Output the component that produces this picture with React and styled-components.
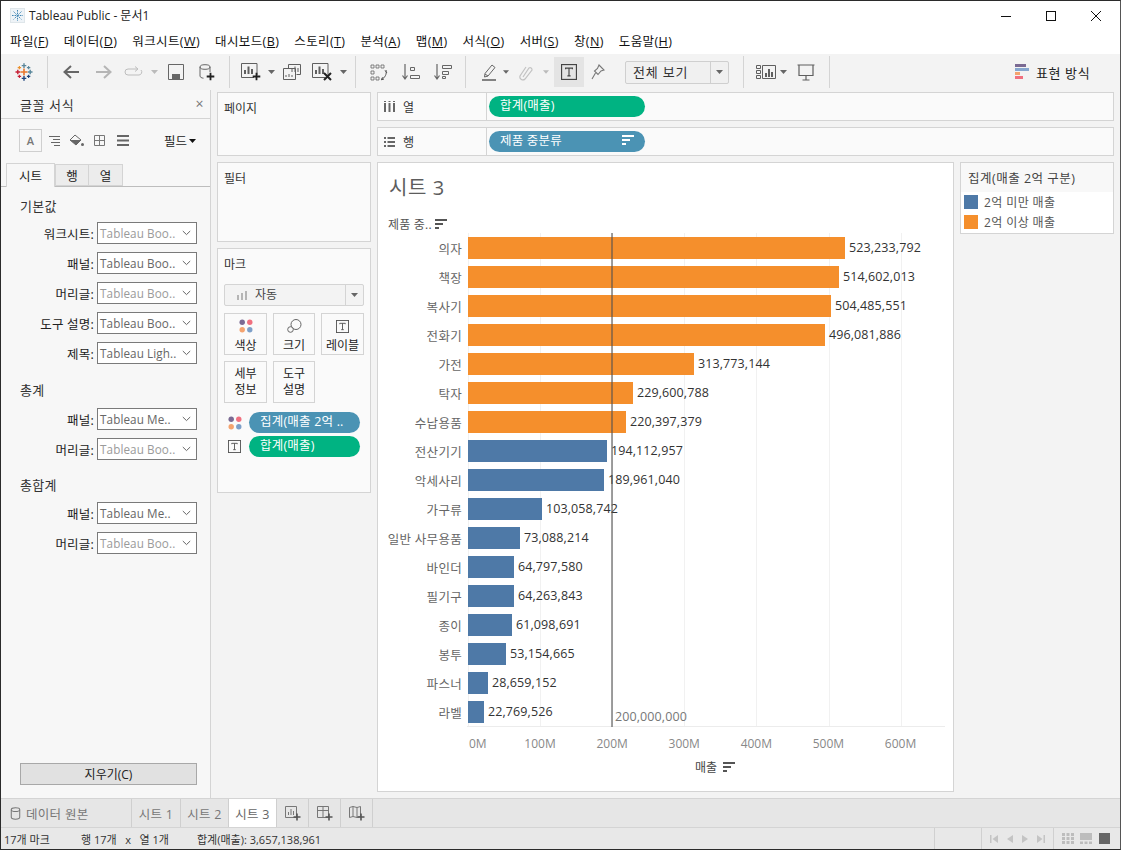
import React from "react";
import styled, { createGlobalStyle } from "styled-components";

const Global = createGlobalStyle`
  html, body { margin: 0; padding: 0; background: #fff; }
  * { box-sizing: border-box; }
  body { font-family: "Open Sans", "Noto Sans CJK KR", sans-serif; font-size: 12px; color: #222; }
`;

const ink = "#5f5f5f";
const Win = styled.div`
  width: 1121px; height: 850px; display: flex; flex-direction: column;
  border: 1px solid #2b2b2b; border-right-color: #555; background: #f3f3f3; overflow: hidden;
`;
const TitleBar = styled.div`
  height: 29px; background: #fff; display: flex; align-items: center; padding: 0 2px 0 9px; flex: none;
`;
const TitleText = styled.span`margin-left: 4px; font-size: 12px; line-height: 16px; color: #222; flex: 1;`;
const WinBtn = styled.div`width: 45px; height: 29px; display: flex; align-items: center; justify-content: center;`;
const MenuBar = styled.div`height: 24px; background: #fff; display: flex; align-items: center; padding-left: 9px; gap: 15px; flex: none;`;
const MenuItem = styled.span`
  font-size: 12.5px; letter-spacing: .4px; line-height: 16px; color: #111; white-space: nowrap;
  u { text-underline-offset: 1px; }
`;
const Toolbar = styled.div`height: 36px; background: #f3f3f3; display: flex; align-items: stretch; flex: none;`;
const ToolGroup = styled.div`
  width: ${p => p.$w}px; flex: none; display: flex; align-items: center; margin: 2px 0;
  border-right: 1px solid #d4d4d4; padding-left: ${p => p.$pad || 0}px;
`;
const Tool = styled.div`
  width: ${p => p.$w}px; height: 30px; flex: none; display: flex; align-items: center; justify-content: center;
  background: ${p => (p.$on ? "#e4e4e4" : "transparent")};
`;
const Combo = styled.div`
  width: 104px; height: 23px; margin-left: 13px; display: flex; align-items: center; background: #f0f0f0;
  border: 1px solid #cfcfcf; border-radius: 2px; font-size: 13px; color: #333;
`;
const ComboText = styled.span`flex: 1; padding-left: 7px; letter-spacing: .8px; line-height: 16px;`;
const ComboArrow = styled.span`
  width: 18px; height: 100%; border-left: 1px solid #cfcfcf; display: flex; align-items: center; justify-content: center;
`;
const ShowMe = styled.div`
  margin-left: auto; width: 105px; display: flex; align-items: center; gap: 7px; font-size: 13px; color: #222; letter-spacing: .6px;
`;

const Main = styled.div`flex: 1; min-height: 0; display: flex;`;
const Side = styled.aside`width: 210px; flex: none; background: #f7f7f7; border-right: 1px solid #d4d4d4; display: flex; flex-direction: column;`;
const SideHead = styled.div`
  height: 29px; flex: none; border-bottom: 1px solid #d4d4d4; display: flex; align-items: center; justify-content: space-between;
  padding: 0 6px 0 19px; font-size: 13px; color: #333; letter-spacing: .6px;
`;
const Close = styled.span`font-size: 14px; color: #777; line-height: 14px;`;
const FmtRow = styled.div`display: flex; align-items: center; margin: 10px 14px 0 18px; height: 23px; flex: none;`;
const FmtA = styled.span`
  width: 23px; height: 23px; border: 1px solid #cfcfcf; display: flex; align-items: center; justify-content: center;
  font-size: 11px; font-weight: 600; color: #777;
`;
const FmtIcon = styled.span`width: 23px; height: 23px; display: flex; align-items: center; justify-content: center;`;
const Field = styled.span`margin-left: auto; display: flex; align-items: center; gap: 2px; font-size: 12.5px; color: #222;`;
const Tabs = styled.div`margin-top: 11px; height: 24px; flex: none; display: flex; align-items: flex-end; padding-left: 5px; border-bottom: 1px solid #bdbdbd;`;
const Tab = styled.div`
  width: ${p => p.$w}px; height: ${p => (p.$on ? 24 : 22)}px; margin-bottom: ${p => (p.$on ? -1 : 0)}px;
  background: ${p => (p.$on ? "#f7f7f7" : "#ececec")}; border: 1px solid #d4d4d4; border-bottom: ${p => (p.$on ? "none" : "1px solid #d4d4d4")};
  border-left: ${p => (p.$first ? "1px solid #d4d4d4" : "none")};
  display: flex; align-items: center; justify-content: center; font-size: 12.5px; color: #222;
`;
const Section = styled.div`margin: ${p => p.$mt}px 0 0 19px; height: 18px; font-size: 13px; line-height: 18px; color: #333; letter-spacing: .3px; flex: none;`;
const Rows = styled.div`margin-top: ${p => p.$mt}px; display: flex; flex-direction: column; gap: 8px; flex: none;`;
const FRow = styled.div`display: flex; align-items: center; height: 22px; justify-content: flex-end; padding-right: 13px; gap: 3px;`;
const FLabel = styled.span`font-size: 12.5px; letter-spacing: .2px; color: #222; white-space: nowrap;`;
const FSelect = styled.div`
  width: 100px; height: 22px; border: 1px solid #7a7a7a; background: #fff; display: flex; align-items: center; padding: 0 5px 0 2px;
  font-size: 11.7px; color: ${p => (p.$muted ? "#9a9a9a" : "#666")}; white-space: nowrap;
`;
const FText = styled.span`flex: 1; letter-spacing: .1px;`;
const ClearBtn = styled.div`
  margin: auto 13px 13px 19px; height: 22px; flex: none; border: 1px solid #a8a8a8; background: #e1e1e1;
  display: flex; align-items: center; justify-content: center; font-size: 12px; color: #222;
`;

const Work = styled.div`flex: 1; min-width: 0; display: flex; gap: 6px; padding: 2px 6px 6px 6px;`;
const Cards = styled.div`width: 154px; flex: none; display: flex; flex-direction: column; gap: 6px;`;
const Card = styled.section`
  height: ${p => p.$h}px; flex: none; background: #fafafa; border: 1px solid #d4d4d4; padding: 7px 6px;
  font-size: 12px; color: #333; line-height: 18px;
`;
const MarkType = styled.div`
  margin-top: 10px; height: 22px; width: 140px; background: #f3f3f3; border: 1px solid #d4d4d4; border-radius: 2px; display: flex; align-items: center;
  font-size: 12px; color: #444;
`;
const MarkName = styled.span`flex: 1; display: flex; align-items: center; gap: 8px; padding-left: 12px;`;
const MarkArrow = styled.span`width: 18px; height: 100%; border-left: 1px solid #d4d4d4; display: flex; align-items: center; justify-content: center;`;
const MarkGrid = styled.div`margin-top: 7px; display: grid; grid-template-columns: 43px 42px 43px; column-gap: 6px; row-gap: 6px; width: 140px;`;
const MarkBtn = styled.div`
  height: 42px; border: 1px solid #d4d4d4; display: flex; flex-direction: column; align-items: center; justify-content: flex-end;
  font-size: 12px; line-height: 15px; color: #222; text-align: center; gap: 5px; padding-bottom: 1px;
`;
const TwoLine = styled.span`font-size: 12px; line-height: 16px; margin-bottom: 3px;`;
const PillRows = styled.div`margin-top: 9px; display: flex; flex-direction: column; gap: 3px;`;
const PillRow = styled.div`display: flex; align-items: center; gap: 4px;`;
const PillIcon = styled.span`width: 21px; display: flex; justify-content: center;`;
const Pill = styled.div`
  width: ${p => p.$w}px; height: 21px; border-radius: 11px; background: ${p => p.$c}; color: #fff; font-size: 12.5px; letter-spacing: .2px; line-height: 17px;
  padding: 0 ${p => p.$pr || 10}px 3px 11px; display: flex; align-items: center; justify-content: space-between; white-space: nowrap;
`;

const Content = styled.div`flex: 1; min-width: 0; display: flex; flex-direction: column; gap: 6px;`;
const Shelf = styled.div`height: 29px; flex: none; display: flex; border: 1px solid #d4d4d4; background: #fafafa;`;
const ShelfName = styled.div`
  width: 109px; flex: none; border-right: 1px solid #d4d4d4; display: flex; align-items: center; gap: 8px; padding-left: 6px; font-size: 12px; color: #333;
`;
const ShelfBody = styled.div`padding: 3px 0 0 2px;`;
const Lower = styled.div`flex: 1; min-height: 0; display: flex; gap: 6px;`;
const Sheet = styled.div`width: 577px; flex: none; background: #fff; border: 1px solid #d4d4d4; display: flex; flex-direction: column;`;
const SheetTitle = styled.div`margin: 12px 0 0 11px; height: 26px; font-size: 20px; line-height: 26px; color: #5d5d5d; letter-spacing: .6px;`;
const RowHeader = styled.div`margin: 15px 0 0 10px; height: 16px; display: flex; align-items: center; gap: 3px; font-size: 12px; letter-spacing: .2px; color: #555;`;
const Plot = styled.div`position: relative; margin-top: 1px; padding: 4px 0; width: 567px; display: flex; flex-direction: column; gap: 7px;`;
const AxisLine = styled.div`position: absolute; left: 89px; right: 0; bottom: 0; height: 1px; background: #ececec;`;
const Grid = styled.div`position: absolute; top: 0; bottom: 0; width: 1px; background: #f1f1f1;`;
const RefLine = styled.div`position: absolute; top: 0; bottom: 0; left: 233px; width: 2px; background: rgba(80,80,80,.55); z-index: 2;`;
const RefLabel = styled.span`position: absolute; left: 237px; bottom: 2px; font-size: 12.5px; line-height: 16px; color: #777; z-index: 2; letter-spacing: .1px;`;
const BarRow = styled.div`position: relative; z-index: 1; display: flex; align-items: center; height: 22px;`;
const RowLabel = styled.span`width: 84px; flex: none; margin-right: 6px; text-align: right; font-size: 12.5px; letter-spacing: .3px; color: #666; white-space: nowrap;`;
const Bar = styled.div`height: 22px; flex: none; background: ${p => (p.$big ? "#f58f2c" : "#4e79a7")};`;
const Value = styled.span`margin-left: 4px; font-size: 12.5px; line-height: 16px; color: #333; letter-spacing: .1px;`;
const Ticks = styled.div`margin: 9px 0 0 90px; display: flex; height: 16px; font-size: 12px; line-height: 16px; color: #888;`;
const Tick = styled.span`flex: none; width: ${p => (p.$first ? 36 : 72.1)}px; text-align: ${p => (p.$first ? "left" : "center")}; padding-left: ${p => (p.$first ? 1 : 0)}px;`;
const AxisTitle = styled.div`margin: 7px 0 0 317px; height: 16px; display: flex; align-items: center; gap: 6px; font-size: 12px; color: #444;`;
const Legend = styled.div`width: 154px; height: 72px; flex: none; background: #fff; border: 1px solid #d4d4d4; display: flex; flex-direction: column;`;
const LegendTitle = styled.div`height: 29px; flex: none; background: #f8f8f8; padding: 0 0 0 7px; display: flex; align-items: center; font-size: 12.5px; letter-spacing: .5px; color: #444; white-space: nowrap;`;
const LegendRow = styled.div`height: 20px; flex: none; display: flex; align-items: center; gap: 6px; padding-left: 3px; font-size: 12px; color: #555; letter-spacing: .4px;`;
const Swatch = styled.span`width: 14px; height: 14px; background: ${p => p.$c};`;

const TabBar = styled.div`height: 30px; flex: none; display: flex; background: #e6e6e6; border-top: 1px solid #d4d4d4; border-bottom: 1px solid #d4d4d4;`;
const SheetTab = styled.div`
  width: ${p => p.$w}px; flex: none; border-right: 1px solid #cfcfcf; background: ${p => (p.$on ? "#fff" : "transparent")};
  display: flex; align-items: center; justify-content: ${p => (p.$left ? "flex-start" : "center")}; padding-left: ${p => (p.$left ? 9 : 0)}px;
  gap: 5px; font-size: 12.5px; color: ${p => (p.$on ? "#666" : "#777")}; letter-spacing: .3px;
`;
const Status = styled.div`height: 21px; flex: none; display: flex; align-items: center; background: #e8e8e8; font-size: 11px; color: #333;`;
const StatusText = styled.span`width: ${p => p.$w}px; flex: none; white-space: pre; padding-left: ${p => p.$pl || 0}px;`;
const StatusCell = styled.div`
  width: ${p => p.$w}px; flex: none; height: 100%; border-left: 1px solid #d0d0d0; display: flex; align-items: center; justify-content: ${p => (p.$around ? "space-around" : "flex-start")};
  padding: 0 ${p => p.$p || 0}px;
`;

const S = ({ w = 18, h = 18, vb, children }) => <svg width={w} height={h} viewBox={vb || `0 0 ${w} ${h}`} fill="none">{children}</svg>;
const Caret = ({ c = "#666" }) => <svg width="7" height="4" viewBox="0 0 7 4"><path d="M0 0h7L3.5 4z" fill={c} /></svg>;
const Chevron = () => <svg width="9" height="6" viewBox="0 0 9 6" fill="none"><path d="M.8 1l3.7 3.6L8.2 1" stroke="#666" /></svg>;
const Sort = ({ c = "#555" }) => <svg width="12" height="10" viewBox="0 0 12 10"><path d="M0 0h12v2H0zM0 4h8v2H0zM0 8h4v2H0z" fill={c} /></svg>;
const TBox = ({ s = 14, c = "#555" }) => (
  <svg width={s} height={s} viewBox="0 0 14 14" fill="none">
    <rect x=".5" y=".5" width="13" height="13" stroke={c} />
    <path d="M4 4.5V3.6h6v.9M7 3.6v6.8M5.6 10.4h2.8" stroke={c} />
  </svg>
);
const Dots = ({ s = 14 }) => (
  <svg width={s} height={s} viewBox="0 0 14 14">
    <circle cx="3.2" cy="3.2" r="2.7" fill="#7b6a93" />
    <circle cx="10.8" cy="3.2" r="2.7" fill="#f0707f" />
    <circle cx="3.2" cy="10.8" r="2.7" fill="#f4a36f" />
    <circle cx="10.8" cy="10.8" r="2.7" fill="#7d9fc8" />
  </svg>
);
const Cross = ({ x, y, r, c, w = 1.4 }) => <path d={`M${x - r} ${y}h${2 * r}M${x} ${y - r}v${2 * r}`} stroke={c} strokeWidth={w} />;
const Logo = ({ s = 18 }) => (
  <svg width={s} height={s} viewBox="0 0 18 18" fill="none">
    <Cross x={9} y={9} r={3.6} c="#e8762c" w={1.6} />
    <Cross x={9} y={2.6} r={2.3} c="#5b879b" />
    <Cross x={9} y={15.4} r={2.3} c="#1f457e" />
    <Cross x={2.8} y={9} r={2.3} c="#c72035" />
    <Cross x={15.2} y={9} r={2.3} c="#59879b" />
    <Cross x={4.4} y={4.6} r={1.7} c="#eb912b" w={1.1} />
    <Cross x={13.6} y={4.6} r={1.7} c="#5b879b" w={1.1} />
    <Cross x={4.4} y={13.4} r={1.7} c="#c72035" w={1.1} />
    <Cross x={13.6} y={13.4} r={1.7} c="#1f457e" w={1.1} />
  </svg>
);
const Plus = ({ x, y, r = 4, w = 2, c = "#222" }) => <path d={`M${x - r} ${y}h${2 * r}M${x} ${y - r}v${2 * r}`} stroke={c} strokeWidth={w} />;
const BarsBox = ({ x = 0, y = 0, w = 16, h = 15 }) => (
  <>
    <path d={`M${x + w} ${y + h - 3}V${y + .5}H${x + .5}V${y + h - .5}H${x + w - 3}`} stroke={ink} />
    <path d={`M${x + 4} ${y + 11}V${y + 7}M${x + 7.5} ${y + 11}V${y + 3.5}M${x + 11} ${y + 11}V${y + 6}`} stroke={ink} strokeWidth="2" />
  </>
);
const Cyl = ({ s = 11, c = "#777" }) => (
  <svg width={s} height={s + 2} viewBox="0 0 13 15" fill="none">
    <ellipse cx="6.5" cy="3" rx="5" ry="2.2" stroke={c} strokeWidth="1.2" />
    <path d="M1.5 3v9c0 1.2 2.2 2.2 5 2.2s5-1 5-2.2V3" stroke={c} strokeWidth="1.2" />
  </svg>
);

const data = [
  ["의자", 523233792], ["책장", 514602013], ["복사기", 504485551], ["전화기", 496081886],
  ["가전", 313773144], ["탁자", 229600788], ["수납용품", 220397379], ["전산기기", 194112957],
  ["악세사리", 189961040], ["가구류", 103058742], ["일반 사무용품", 73088214], ["바인더", 64797580],
  ["필기구", 64263843], ["종이", 61098691], ["봉투", 53154665], ["파스너", 28659152], ["라벨", 22769526],
];
const SCALE = 72.1 / 1e8;
const menus = [["파일", "F"], ["데이터", "D"], ["워크시트", "W"], ["대시보드", "B"], ["스토리", "T"], ["분석", "A"], ["맵", "M"], ["서식", "O"], ["서버", "S"], ["창", "N"], ["도움말", "H"]];

const FontRow = ({ label, value, muted }) => (
  <FRow>
    <FLabel>{label}:</FLabel>
    <FSelect $muted={muted}><FText>{value}</FText><Chevron /></FSelect>
  </FRow>
);

export default function App() {
  return (
    <Win>
      <Global />
      <TitleBar>
        <svg width="15" height="15" viewBox="0 0 15 15" fill="none">
          <rect x=".5" y=".5" width="14" height="14" fill="#eef3f7" stroke="#dfe6ea" />
          <g stroke="#3f86b5" strokeWidth="1">
            <path d="M7.5 2v11M2 7.5h11M3.6 3.6l7.8 7.8M11.4 3.6l-7.8 7.8" strokeDasharray="1.6 1" />
          </g>
        </svg>
        <TitleText>Tableau Public - 문서1</TitleText>
        <WinBtn><svg width="10" height="10" viewBox="0 0 10 10"><path d="M0 5.5h10" stroke="#111" /></svg></WinBtn>
        <WinBtn><svg width="10" height="10" viewBox="0 0 10 10" fill="none"><rect x=".5" y=".5" width="9" height="9" stroke="#111" /></svg></WinBtn>
        <WinBtn><svg width="10" height="10" viewBox="0 0 10 10"><path d="M0 0l10 10M10 0L0 10" stroke="#111" /></svg></WinBtn>
      </TitleBar>
      <MenuBar>
        {menus.map(([n, k]) => <MenuItem key={k}>{n}(<u>{k}</u>)</MenuItem>)}
      </MenuBar>
      <Toolbar>
        <ToolGroup $w={47} $pad={14}><Logo s={18} /></ToolGroup>
        <ToolGroup $w={182} $pad={6}>
          <Tool $w={34}><S w={18} h={16}><path d="M17 8H3M9 2L2.5 8 9 14" stroke="#666" strokeWidth="2" /></S></Tool>
          <Tool $w={32}><S w={18} h={16}><path d="M1 8h14M9 2l6.5 6L9 14" stroke="#b5b5b5" strokeWidth="2" /></S></Tool>
          <Tool $w={28}><S w={20} h={12}><path d="M13 3H4a3 3 0 0 0 0 6h11a3 3 0 0 0 2-5M11 .5L14 3l-3 2.5" stroke="#bdbdbd" /></S></Tool>
          <Tool $w={12}><Caret c="#bbb" /></Tool>
          <Tool $w={32}><S w={16} h={16}><path d="M.5.5h15v15H.5z" stroke="#666" /><rect x="4" y="10" width="8" height="5" fill="#666" /></S></Tool>
          <Tool $w={30}><S w={16} h={17}><ellipse cx="6" cy="3" rx="5" ry="2.3" stroke="#666" /><path d="M1 3v9c0 1.2 1.6 2 3.5 2.2M11 3v5" stroke="#666" /><Plus x={11.5} y={12.5} r={3.8} w={1.8} /></S></Tool>
        </ToolGroup>
        <ToolGroup $w={126} $pad={9}>
          <Tool $w={24}><S w={20} h={18}><BarsBox /><Plus x={15.5} y={13.5} r={3.8} w={1.8} /></S></Tool>
          <Tool $w={16}><Caret /></Tool>
          <Tool $w={26}><S w={18} h={16}><path d="M5.5 4V.5h12v10h-4M.5 4.5h12v11H.5z" stroke={ink} /><path d="M9 8V5M12 8V2.5M15 8V4M3 13v-2M6 13v-3M9 13v-2" stroke={ink} /></S></Tool>
          <Tool $w={34}><S w={20} h={18}><BarsBox /><path d="M12 10l7 7M19 10l-7 7" stroke="#222" strokeWidth="2" /></S></Tool>
          <Tool $w={8}><Caret /></Tool>
        </ToolGroup>
        <ToolGroup $w={110} $pad={7}>
          <Tool $w={32}><S w={18} h={17}><path d="M1 1h3v3H1zM6 1h3v3H6zM11 1h3v3h-3zM1 7h3v3H1zM1 13h3v3H1zM6 13h3v3H6z" stroke="#666" strokeWidth=".8" /><path d="M16 6c1 4-1 8-5 9.5M15 6.5L17 9M14 15l-2.5.8 1-2.5" stroke="#555" /></S></Tool>
          <Tool $w={32}><S w={18} h={17}><path d="M3 0v14M.5 11.5L3 15l2.5-3.5" stroke="#666" strokeWidth="1.2" /><path d="M8.5 3.5h4v3h-4zM8.5 11.5h9v3h-9z" stroke="#666" /></S></Tool>
          <Tool $w={32}><S w={18} h={17}><path d="M3 0v14M.5 11.5L3 15l2.5-3.5" stroke="#666" strokeWidth="1.2" /><path d="M8.5 1.5h9v3h-9zM8.5 7.5h6v3h-6zM8.5 12.5h3v2h-3z" stroke="#666" /></S></Tool>
        </ToolGroup>
        <ToolGroup $w={278} $pad={9}>
          <Tool $w={28}><S w={14} h={17}><path d="M10 1l3 2.5-7 8.500-3.500 1 .5-3.500zM3 10l3 2" stroke="#666" /><path d="M0 16h14" stroke="#666" strokeWidth="1.6" /></S></Tool>
          <Tool $w={6}><Caret /></Tool>
          <Tool $w={34}><S w={14} h={17}><path d="M4 13l6-9a2 2 0 0 1 3 2L6 15a3 3 0 0 1-5-3l6-9" stroke="#c2c2c2" strokeWidth="1.2" /></S></Tool>
          <Tool $w={6}><Caret c="#bbb" /></Tool>
          <Tool $w={5} />
          <Tool $w={30} $on><TBox s={16} c="#444" /></Tool>
          <Tool $w={28}><S w={14} h={16}><path d="M8 1l5 5-3 1-3 3.5L3.5 7l3-2.5zM4.5 9L1 15" stroke="#777" strokeWidth="1.1" /></S></Tool>
          <Combo>
            <ComboText>전체 보기</ComboText>
            <ComboArrow><Caret /></ComboArrow>
          </Combo>
        </ToolGroup>
        <ToolGroup $w={86} $pad={12}>
          <Tool $w={20}><S w={20} h={16}><path d="M.5 1.5h4v3h-4zM.5 6.5h4v3h-4zM.5 11.5h4v3h-4zM6.5 1.5h13v13h-13z" stroke={ink} /><path d="M10 13V9M13 13V5M16 13V8" stroke={ink} strokeWidth="2" /></S></Tool>
          <Tool $w={14}><Caret /></Tool>
          <Tool $w={32}><S w={18} h={17}><path d="M.5 1h17M2 1v10.5h14V1M9 11.5V16M5.5 16h7" stroke={ink} strokeWidth="1.2" /></S></Tool>
        </ToolGroup>
        <ShowMe>
          <S w={14} h={16}><path d="M0 0h11v3H0z" fill="#7b6a93" /><path d="M0 4h14v3H0z" fill="#87a7cf" /><path d="M0 8h5v3H0z" fill="#f4a36f" /><path d="M0 12h8v3H0z" fill="#f0707f" /></S>
          표현 방식
        </ShowMe>
      </Toolbar>
      <Main>
        <Side>
          <SideHead>글꼴 서식<Close>×</Close></SideHead>
          <FmtRow>
            <FmtA>A</FmtA>
            <FmtIcon><S w={12} h={10}><path d="M1 .5h11M5 3.5h7M3 6.5h9M6 9.5h6" stroke="#666" /></S></FmtIcon>
            <FmtIcon><S w={15} h={13}><path d="M1 6l5-5 6 5-5 5z" stroke="#666" /><path d="M1 6h11l-5 5z" fill="#666" /><circle cx="13.5" cy="10.5" r="1.5" fill="#666" /></S></FmtIcon>
            <FmtIcon><S w={11} h={11}><path d="M.5.5h10v10H.5zM5.5.5v10M.5 5.5h10" stroke="#777" /></S></FmtIcon>
            <FmtIcon><S w={12} h={11}><path d="M0 0h12v2H0zM0 4.5h12v2H0zM0 9h12v2H0z" fill="#666" /></S></FmtIcon>
            <Field>필드<Caret c="#111" /></Field>
          </FmtRow>
          <Tabs>
            <Tab $w={49} $on $first>시트</Tab>
            <Tab $w={34} $first>행</Tab>
            <Tab $w={34}>열</Tab>
          </Tabs>
          <Section $mt={10}>기본값</Section>
          <Rows $mt={7}>
            <FontRow label="워크시트" value="Tableau Boo.." muted />
            <FontRow label="패널" value="Tableau Boo.." />
            <FontRow label="머리글" value="Tableau Boo.." muted />
            <FontRow label="도구 설명" value="Tableau Boo.." />
            <FontRow label="제목" value="Tableau Ligh.." />
          </Rows>
          <Section $mt={17}>총계</Section>
          <Rows $mt={9}>
            <FontRow label="패널" value="Tableau Me.." />
            <FontRow label="머리글" value="Tableau Boo.." muted />
          </Rows>
          <Section $mt={16}>총합계</Section>
          <Rows $mt={8}>
            <FontRow label="패널" value="Tableau Me.." />
            <FontRow label="머리글" value="Tableau Boo.." muted />
          </Rows>
          <ClearBtn>지우기(C)</ClearBtn>
        </Side>
        <Work>
          <Cards>
            <Card $h={64}>페이지</Card>
            <Card $h={80}>필터</Card>
            <Card $h={245}>
              마크
              <MarkType>
                <MarkName>
                  <S w={10} h={9}><path d="M0 4h2v5H0zM4 2h2v7H4zM8 0h2v9H8z" fill="#b5b5b5" /></S>
                  자동
                </MarkName>
                <MarkArrow><Caret /></MarkArrow>
              </MarkType>
              <MarkGrid>
                <MarkBtn><Dots />색상</MarkBtn>
                <MarkBtn><S w={15} h={14}><circle cx="9" cy="5.5" r="5" stroke="#666" /><circle cx="3.5" cy="10.5" r="2.8" fill="#fafafa" stroke="#666" /></S>크기</MarkBtn>
                <MarkBtn><TBox s={13} />레이블</MarkBtn>
                <MarkBtn><TwoLine>세부<br />정보</TwoLine></MarkBtn>
                <MarkBtn><TwoLine>도구<br />설명</TwoLine></MarkBtn>
              </MarkGrid>
              <PillRows>
                <PillRow>
                  <PillIcon><Dots /></PillIcon>
                  <Pill $w={111} $c="#4b93b4" $pr={10}><span>집계(매출 2억 ..</span></Pill>
                </PillRow>
                <PillRow>
                  <PillIcon><TBox s={13} /></PillIcon>
                  <Pill $w={111} $c="#00b382"><span>합계(매출)</span></Pill>
                </PillRow>
              </PillRows>
            </Card>
          </Cards>
          <Content>
            <Shelf>
              <ShelfName>
                <S w={11} h={11}><path d="M0 2h2v9H0zM0 0h2v1H0zM4.5 2h2v9h-2zM4.5 0h2v1h-2zM9 2h2v9H9zM9 0h2v1H9z" fill="#666" /></S>
                열
              </ShelfName>
              <ShelfBody><Pill $w={156} $c="#00b382"><span>합계(매출)</span></Pill></ShelfBody>
            </Shelf>
            <Shelf>
              <ShelfName>
                <S w={11} h={10}><path d="M0 0h2v2H0zM3.5 0H11v2H3.5zM0 4h2v2H0zM3.5 4H11v2H3.5zM0 8h2v2H0zM3.5 8H11v2H3.5z" fill="#666" /></S>
                행
              </ShelfName>
              <ShelfBody><Pill $w={156} $c="#4b93b4" $pr={11}><span>제품 중분류</span><Sort c="#fff" /></Pill></ShelfBody>
            </Shelf>
            <Lower>
              <Sheet>
                <SheetTitle>시트 3</SheetTitle>
                <RowHeader>제품 중..<Sort c="#555" /></RowHeader>
                <Plot>
                  {[0, 1, 2, 3, 4, 5, 6].map(i => <Grid key={i} style={{ left: 90 + i * 72.1 }} />)}
                  <AxisLine />
                  <RefLine />
                  <RefLabel>200,000,000</RefLabel>
                  {data.map(([name, v]) => (
                    <BarRow key={name}>
                      <RowLabel>{name}</RowLabel>
                      <Bar $big={v >= 2e8} style={{ width: Math.round(v * SCALE - 0.5) }} />
                      <Value>{v.toLocaleString("en-US")}</Value>
                    </BarRow>
                  ))}
                </Plot>
                <Ticks>
                  {["0M", "100M", "200M", "300M", "400M", "500M", "600M"].map((t, i) => <Tick key={t} $first={i === 0}>{t}</Tick>)}
                </Ticks>
                <AxisTitle>매출<Sort c="#555" /></AxisTitle>
              </Sheet>
              <Legend>
                <LegendTitle>집계(매출 2억 구분)</LegendTitle>
                <LegendRow><Swatch $c="#4e79a7" />2억 미만 매출</LegendRow>
                <LegendRow><Swatch $c="#f58f2c" />2억 이상 매출</LegendRow>
              </Legend>
            </Lower>
          </Content>
        </Work>
      </Main>
      <TabBar>
        <SheetTab $w={131} $left><Cyl />데이터 원본</SheetTab>
        <SheetTab $w={49}>시트 1</SheetTab>
        <SheetTab $w={48}>시트 2</SheetTab>
        <SheetTab $w={48} $on>시트 3</SheetTab>
        <SheetTab $w={32}><S w={16} h={15}><path d="M.5.5h11v11H.5z" stroke="#777" /><path d="M3.5 9V6M6 9V3M8.5 9V5" stroke="#777" /><Plus x={12} y={11} r={3.5} w={1.6} c="#555" /></S></SheetTab>
        <SheetTab $w={32}><S w={16} h={15}><path d="M.5.5h11v11H.5zM.5 4.5h11M6 .5v11" stroke="#777" /><Plus x={12} y={11} r={3.5} w={1.6} c="#555" /></S></SheetTab>
        <SheetTab $w={32}><S w={16} h={15}><path d="M.5 1.5L4 .5l4 1 3.5-1v10l-3.5 1-4-1-3.5 1zM4 .5v10M8 1.5v10" stroke="#777" /><Plus x={12} y={11} r={3.5} w={1.6} c="#555" /></S></SheetTab>
      </TabBar>
      <Status>
        <StatusText $w={80} $pl={3}>17개 마크</StatusText>
        <StatusText $w={116}>행 17개   x   열 1개</StatusText>
        <StatusText $w={737}>합계(매출): 3,657,138,961</StatusText>
        <StatusCell $w={47} />
        <StatusCell $w={72} $around $p={3}>
          <S w={8} h={8}><path d="M0 0h1.5v8H0zM8 0v8L2.5 4z" fill="#c4c4c4" /></S>
          <S w={6} h={8}><path d="M6 0v8L0 4z" fill="#c4c4c4" /></S>
          <S w={6} h={8}><path d="M0 0v8l6-4z" fill="#c4c4c4" /></S>
          <S w={8} h={8}><path d="M8 0H6.5v8H8zM0 0v8l5.5-4z" fill="#c4c4c4" /></S>
        </StatusCell>
        <StatusCell $w={65} $around $p={5}>
          <S w={12} h={11}><path d="M0 0h3v3H0zM4.5 0h3v3h-3zM9 0h3v3H9zM0 4h3v3H0zM4.5 4h3v3h-3zM9 4h3v3H9zM0 8h3v3H0zM4.5 8h3v3h-3zM9 8h3v3H9z" fill="#bdbdbd" /></S>
          <S w={12} h={11}><path d="M0 0h12v7H0zM0 8.5h3V11H0zM4.5 8.5h3V11h-3zM9 8.5h3V11H9z" fill="#bdbdbd" /></S>
          <S w={11} h={11}><rect width="11" height="11" fill="#666" /></S>
        </StatusCell>
      </Status>
    </Win>
  );
}
